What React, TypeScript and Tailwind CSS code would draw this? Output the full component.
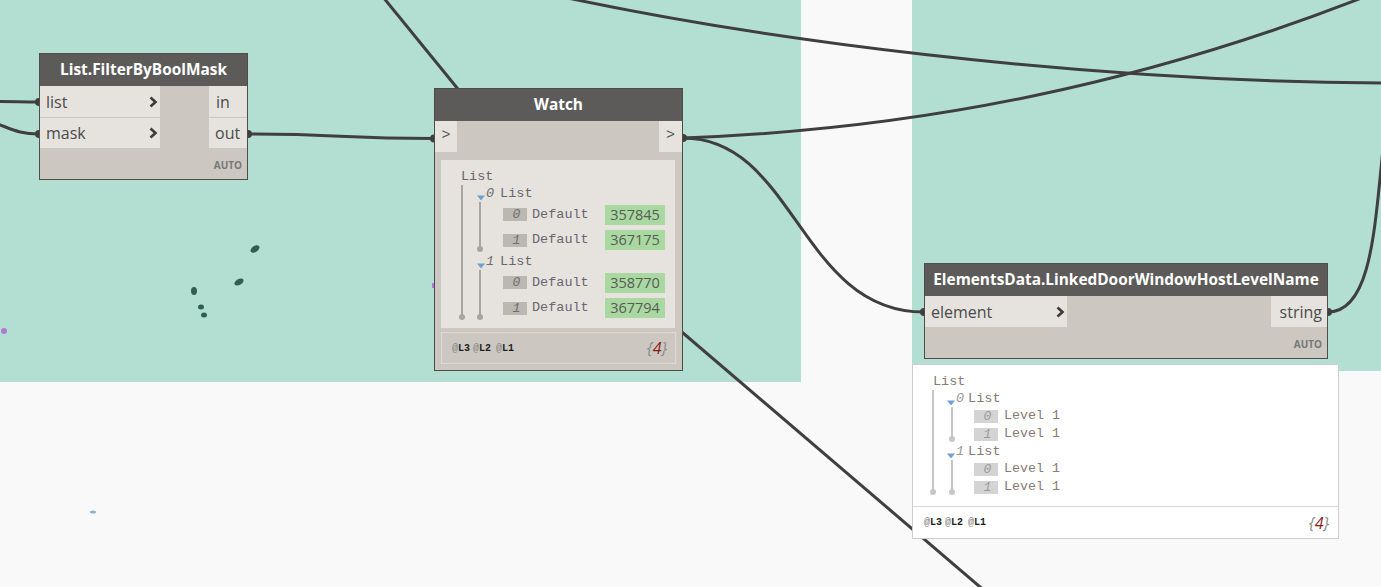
import React from "react";

const SANS = "font-['Open_Sans','Noto_Sans',sans-serif]";
const MONO = "font-['Liberation_Mono','DejaVu_Sans_Mono',monospace]";

function Chevron() {
  return (
    <svg width="10" height="12" viewBox="0 0 10 12">
      <path d="M2.5 1.5 L7.5 6 L2.5 10.5" fill="none" stroke="#3b3b3b" strokeWidth="2.6" />
    </svg>
  );
}

function Tri() {
  return (
    <svg width="8" height="6" viewBox="0 0 8 6" className="translate-y-[4px]">
      <path d="M0 0.5 L8 0.5 L4 5.5 Z" fill="#6f9fd4" />
    </svg>
  );
}

type Variant = "node" | "preview";

function VLine({ v, className }: { v: Variant; className: string }) {
  const c = v === "node" ? "bg-[#a9a59f]" : "bg-[#c6c6c6]";
  return (
    <div className={`flex flex-col items-center w-[6px] ${className}`}>
      <div className={`w-[2px] flex-1 ${c}`} />
      <div className={`w-[6px] h-[6px] rounded-full ${c} -mt-[1px] mb-[1px]`} />
    </div>
  );
}

function Item({ v, idx, label, value }: { v: Variant; idx: string; label: string; value?: string }) {
  if (v === "node") {
    return (
      <div className="h-[25.5px] flex items-center pr-[10px]">
        <div className={`w-[24px] h-[13px] bg-[#bbb7b1] flex items-center justify-center pl-[3px] italic text-[13px] leading-none text-[#6e6e6e] ${MONO}`}>
          {idx}
        </div>
        <span className={`ml-[5px] text-[13.5px] text-[#6a6670] ${MONO}`}>{label}</span>
        <div className={`ml-auto w-[60px] h-[20px] bg-[#a9d9a1] flex items-center justify-center text-[14.5px] text-[#5a5a5a] ${SANS}`}>
          {value}
        </div>
      </div>
    );
  }
  return (
    <div className="h-[18px] flex items-center">
      <div className={`w-[24px] h-[13px] bg-[#d4d4d4] flex items-center justify-center pl-[3px] italic text-[13px] leading-none text-[#9a9a9a] ${MONO}`}>
        {idx}
      </div>
      <span className={`ml-[6px] text-[13.3px] text-[#867b75] ${MONO}`}>{label}</span>
    </div>
  );
}

function SubList({ v, idx, items }: { v: Variant; idx: string; items: { label: string; value?: string }[] }) {
  const node = v === "node";
  const textC = node ? "text-[#6a6670]" : "text-[#867b75]";
  return (
    <div className="flex flex-col">
      <div className="h-[17px] flex items-center">
        <Tri />
        <span className={`ml-[1px] italic text-[13.5px] leading-[16px] ${node ? "text-[#6e6e6e]" : "text-[#999]"} ${MONO}`}>{idx}</span>
        <span className={`${node ? "ml-[6px]" : "ml-[4px]"} text-[13.5px] leading-[16px] ${textC} ${MONO}`}>List</span>
      </div>
      <div className="flex">
        <VLine v={v} className={node ? "ml-0" : "ml-[2px]"} />
        <div className={`flex flex-col flex-1 ${node ? "ml-[20px]" : "ml-[19px]"}`}>
          {items.map((it, i) => (
            <Item key={i} v={v} idx={String(i)} label={it.label} value={it.value} />
          ))}
        </div>
      </div>
    </div>
  );
}

function Tree({ v, data }: { v: Variant; data: { label: string; value?: string }[][] }) {
  const node = v === "node";
  const textC = node ? "text-[#6a6670]" : "text-[#867b75]";
  return (
    <div className={`flex flex-col pt-[8px] ${node ? "" : "pb-[10px]"}`}>
      <div className={`h-[17px] ml-[20px] text-[13.5px] leading-[17px] ${textC} ${MONO}`}>List</div>
      <div className="flex">
        <VLine v={v} className={node ? "ml-[18px]" : "ml-[17px]"} />
        <div className={`flex flex-col flex-1 ${node ? "ml-[12px]" : "ml-[11px]"}`}>
          {data.map((items, i) => (
            <SubList key={i} v={v} idx={String(i)} items={items} />
          ))}
        </div>
      </div>
    </div>
  );
}

function Levels() {
  return (
    <div className={`flex items-center text-[10px] font-bold ${MONO}`}>
      <span><span className="text-[#8a8a8a]">@</span><span className="text-[#1e1e1e]">L3</span></span>
      <span className="ml-[3px]"><span className="text-[#8a8a8a]">@</span><span className="text-[#1e1e1e]">L2</span></span>
      <span className="ml-[5px]"><span className="text-[#8a8a8a]">@</span><span className="text-[#1e1e1e]">L1</span></span>
    </div>
  );
}

function Count() {
  return (
    <div className={`italic text-[16px] ${SANS}`}>
      <span className="text-[#8a8a8a]">{"{"}</span>
      <span className="text-[#8c1c1c]">4</span>
      <span className="text-[#8a8a8a]">{"}"}</span>
    </div>
  );
}

function Header({ title }: { title: string }) {
  return (
    <div className={`h-[32px] bg-[#5d5b59] text-white font-bold text-[15.4px] flex items-center justify-center ${SANS}`}>
      {title}
    </div>
  );
}

function PortLabel({ children }: { children: React.ReactNode }) {
  return <span className={`text-[16px] text-[#4b4b4b] ${SANS}`}>{children}</span>;
}

function Auto() {
  return <div className={`text-[10px] font-bold text-[#777] ${SANS}`}>AUTO</div>;
}

const watchData = [
  [
    { label: "Default", value: "357845" },
    { label: "Default", value: "367175" },
  ],
  [
    { label: "Default", value: "358770" },
    { label: "Default", value: "367794" },
  ],
];

const previewData = [
  [{ label: "Level 1" }, { label: "Level 1" }],
  [{ label: "Level 1" }, { label: "Level 1" }],
];

export default function App() {
  const W = "#3f3f3f";
  return (
    <div className="relative w-[1381px] h-[587px] overflow-hidden bg-[#f9f9f9]">
      {/* groups */}
      <div className="absolute left-0 top-0 w-[801px] h-[382px] bg-[#b3dfd2]" />
      <div className="absolute left-[912px] top-0 w-[469px] h-[371px] bg-[#b3dfd2]" />

      {/* wires and canvas marks */}
      <svg className="absolute left-0 top-0" width="1381" height="587" viewBox="0 0 1381 587">
        <g fill="#2f5f50">
          <ellipse cx="255" cy="249" rx="5" ry="3" transform="rotate(-35 255 249)" />
          <ellipse cx="239" cy="282" rx="5" ry="3" transform="rotate(-30 239 282)" />
          <ellipse cx="194" cy="291" rx="3" ry="4" />
          <ellipse cx="201" cy="307" rx="3" ry="2.5" />
          <ellipse cx="204" cy="315" rx="3" ry="2.5" />
        </g>
        <circle cx="4" cy="331" r="3" fill="#b27ad3" />
        <rect x="432" y="283" width="2" height="5" fill="#b27ad3" />
        <ellipse cx="93" cy="512" rx="3" ry="1.5" fill="#8ab3cf" />
        <g fill="none" stroke={W} strokeWidth="3">
          <path d="M -5 101.5 C 15 101.5, 20 102, 39 102" />
          <path d="M -20 118 C 10 127, 15 134, 39 134" />
          <path d="M 248 134 C 340 134, 340 138.5, 434 138.5" />
          <path d="M 383 -3 L 462 94" />
          <path d="M 683 138 C 900 130, 1150 90, 1430 -30" />
          <path d="M 480 -22 C 740 42, 1100 83, 1400 83" />
          <path d="M 1328 312 C 1390 312, 1370 140, 1400 60" />
          <path d="M 683 138 C 795 138, 800 312, 924 312" />
          <path d="M 600 262 L 1000 604" />
        </g>
        <g fill={W}>
          <circle cx="39" cy="102" r="4" />
          <circle cx="39" cy="134" r="4" />
          <circle cx="248" cy="134" r="4" />
          <circle cx="434" cy="138.5" r="4" />
          <circle cx="683" cy="138" r="4" />
          <circle cx="924" cy="312" r="4" />
          <circle cx="1328" cy="312" r="4" />
        </g>
      </svg>

      {/* List.FilterByBoolMask */}
      <div className="absolute left-[39px] top-[53px] w-[209px] h-[127px] border border-[#4f4d4b] bg-[#ccc8c1] flex flex-col">
        <Header title="List.FilterByBoolMask" />
        <div className="flex">
          <div className="flex flex-col gap-[1px] w-[120px]">
            <div className="h-[31px] bg-[#e6e3de] flex items-center justify-between pl-[6px] pr-[2px]">
              <PortLabel>list</PortLabel>
              <Chevron />
            </div>
            <div className="h-[30px] bg-[#e6e3de] flex items-center justify-between pl-[6px] pr-[2px]">
              <PortLabel>mask</PortLabel>
              <Chevron />
            </div>
          </div>
          <div className="flex-1" />
          <div className="flex flex-col gap-[1px] w-[38px]">
            <div className="h-[31px] bg-[#e6e3de] flex items-center pl-[7px]">
              <PortLabel>in</PortLabel>
            </div>
            <div className="h-[30px] bg-[#e6e3de] flex items-center pl-[6px]">
              <PortLabel>out</PortLabel>
            </div>
          </div>
        </div>
        <div className="flex-1 flex items-end justify-end pr-[5px] pb-[6px]">
          <Auto />
        </div>
      </div>

      {/* Watch */}
      <div className="absolute left-[434px] top-[88px] w-[249px] h-[283px] border border-[#4f4d4b] bg-[#ccc8c1] flex flex-col">
        <Header title="Watch" />
        <div className="h-[31px] flex justify-between">
          <div className={`w-[22px] bg-[#e6e3de] flex items-center justify-center text-[15px] text-[#555] ${MONO}`}>&gt;</div>
          <div className={`w-[23px] bg-[#e6e3de] flex items-center justify-center text-[15px] text-[#555] ${MONO}`}>&gt;</div>
        </div>
        <div className="mx-[6px] mt-[8px] h-[168px] w-[234px] bg-[#e6e3de]">
          <Tree v="node" data={watchData} />
        </div>
        <div className="ml-[6px] mt-[4px] w-[235px] h-[32px] border border-[#dcd8d2] flex items-center justify-between pl-[10px] pr-[8px]">
          <Levels />
          <Count />
        </div>
      </div>

      {/* ElementsData node */}
      <div className="absolute left-[924px] top-[263px] w-[404px] h-[96px] border border-[#4f4d4b] bg-[#ccc8c1] flex flex-col">
        <Header title="ElementsData.LinkedDoorWindowHostLevelName" />
        <div className="h-[31px] flex justify-between">
          <div className="w-[142px] bg-[#e6e3de] flex items-center justify-between pl-[6px] pr-[2px]">
            <PortLabel>element</PortLabel>
            <Chevron />
          </div>
          <div className="w-[56px] bg-[#e6e3de] flex items-center justify-end pr-[5px]">
            <PortLabel>string</PortLabel>
          </div>
        </div>
        <div className="flex-1 flex items-end justify-end pr-[5px] pb-[6px]">
          <Auto />
        </div>
      </div>

      {/* Preview bubble */}
      <div className="absolute left-[912px] top-[364px] w-[427px] h-[175px] border border-[#cdcdcd] bg-white flex flex-col">
        <div className="h-[141px]">
          <Tree v="preview" data={previewData} />
        </div>
        <div className="flex-1 border-t border-[#d9d9d9] flex items-center justify-between pl-[11px] pr-[9px]">
          <Levels />
          <Count />
        </div>
      </div>
    </div>
  );
}
